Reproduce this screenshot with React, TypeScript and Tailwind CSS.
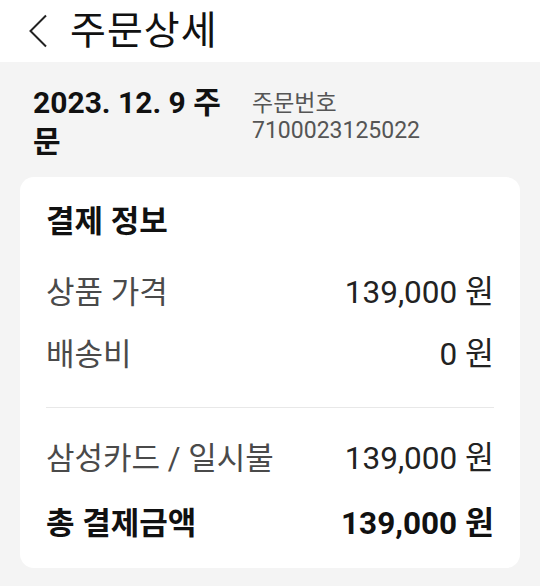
import React from 'react'

const font = { fontFamily: 'Roboto, "Noto Sans CJK KR", sans-serif' }

interface RowProps {
    label: string
    value: string
    bold?: boolean
    className?: string
}

const Row: React.FC<RowProps> = ({ label, value, bold = false, className = '' }) => (
    <div className={`flex items-center justify-between leading-[40px] ${className}`}>
        <span className={bold ? 'text-[31px] font-bold text-[#111]' : 'text-[31px] text-[#4a4a4a]'}>{label}</span>
        <span className={bold ? 'text-[31.5px] font-bold text-[#111]' : 'text-[31.5px] text-[#222]'}>{value}</span>
    </div>
)

export default function App() {
    return (
        <div className="w-[540px] h-[586px] bg-[#f4f4f4] overflow-hidden" style={font}>
            {/* header */}
            <div className="h-[62px] bg-white flex items-center pl-[28px]">
                <svg width="20" height="34" viewBox="0 0 20 34" fill="none" className="shrink-0">
                    <path d="M18 1.5 L2.5 17 L18 32.5" stroke="#222" strokeWidth="2" />
                </svg>
                <h1 className="ml-[22px] text-[39px] leading-none text-[#111] tracking-[1px]">주문상세</h1>
            </div>

            <div className="px-5 pt-[21px]">
                <div className="flex gap-[19px] pl-[13px]">
                    <div className="w-[200px] text-[30px] font-bold leading-[39px] text-[#111] break-all">
                        2023. 12. 9 주문
                    </div>
                    <div className="mt-[7px] text-[23px] leading-[27px] text-[#555]">
                        <div>주문번호</div>
                        <div>7100023125022</div>
                    </div>
                </div>

                <div className="mt-[16px] bg-white rounded-[14px] px-[26px] pt-[27px] pb-[24px]">
                    <div className="text-[31px] font-bold leading-[36px] text-[#111]">결제 정보</div>
                    <Row label="상품 가격" value="139,000 원" className="mt-[33px]" />
                    <Row label="배송비" value="0 원" className="mt-[22px]" />
                    <div className="mt-[32px] h-px bg-[#e8e8e8]" />
                    <Row label="삼성카드 / 일시불" value="139,000 원" className="mt-[31px]" />
                    <Row label="총 결제금액" value="139,000 원" bold className="mt-[25px]" />
                </div>
            </div>
        </div>
    )
}
